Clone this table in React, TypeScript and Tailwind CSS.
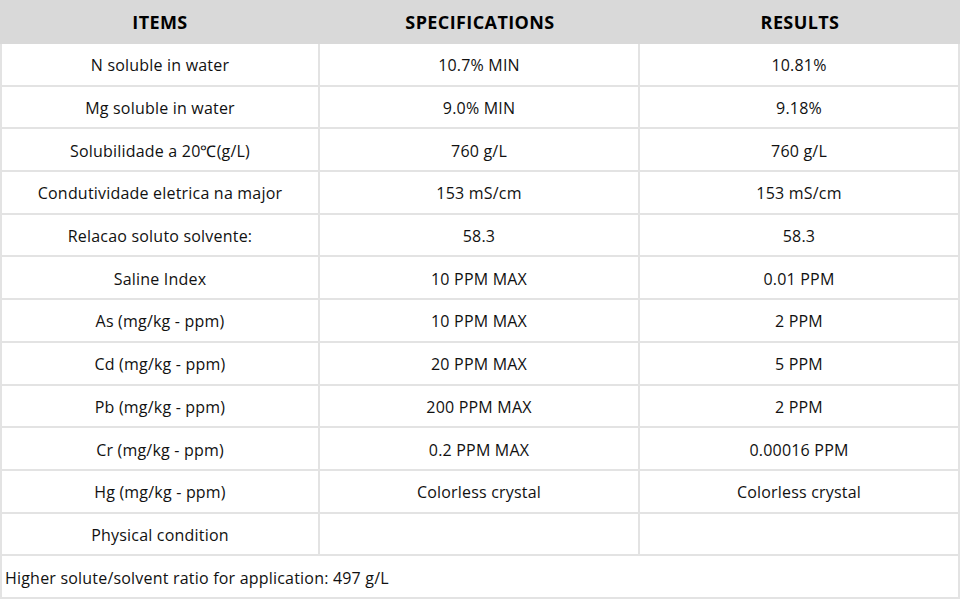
import React from "react";

const rows: [string, string, string][] = [
  ["N soluble in water", "10.7% MIN", "10.81%"],
  ["Mg soluble in water", "9.0% MIN", "9.18%"],
  ["Solubilidade a 20℃(g/L)", "760 g/L", "760 g/L"],
  ["Condutividade eletrica na major", "153 mS/cm", "153 mS/cm"],
  ["Relacao soluto solvente:", "58.3", "58.3"],
  ["Saline Index", "10 PPM MAX", "0.01 PPM"],
  ["As (mg/kg - ppm)", "10 PPM MAX", "2 PPM"],
  ["Cd (mg/kg - ppm)", "20 PPM MAX", "5 PPM"],
  ["Pb (mg/kg - ppm)", "200 PPM MAX", "2 PPM"],
  ["Cr (mg/kg - ppm)", "0.2 PPM MAX", "0.00016 PPM"],
  ["Hg (mg/kg - ppm)", "Colorless crystal", "Colorless crystal"],
  ["Physical condition", "", ""],
];

export default function App() {
  return (
    <div
      className="w-[960px] h-[600px] bg-white text-[#111] flex flex-col overflow-hidden"
      style={{ fontFamily: '"Open Sans", sans-serif' }}
    >
      <div className="h-[44px] shrink-0 bg-[#d9d9d9] grid grid-cols-3 items-center text-[18px] tracking-[0.4px] font-bold text-black">
        <div className="text-center">ITEMS</div>
        <div className="text-center">SPECIFICATIONS</div>
        <div className="text-center">RESULTS</div>
      </div>
      {rows.map((r, i) => (
        <div
          key={i}
          className="h-[42.7px] shrink-0 grid grid-cols-3 border-b-2 border-[#e3e3e3] text-[16px] tracking-[0.2px]"
        >
          <div className="flex items-center justify-center pt-[2px] border-l-2 border-r-2 border-[#e3e3e3]">{r[0]}</div>
          <div className="flex items-center justify-center pt-[2px] border-r-2 border-[#e3e3e3]">{r[1]}</div>
          <div className="flex items-center justify-center pt-[2px] border-r-2 border-[#e3e3e3]">{r[2]}</div>
        </div>
      ))}
      <div className="h-[42.7px] shrink-0 flex items-center px-[3px] pt-[2px] border-b-2 border-l-2 border-r-2 border-[#e3e3e3] text-[16px] tracking-[0.2px]">
        Higher solute/solvent ratio for application: 497 g/L
      </div>
    </div>
  );
}
